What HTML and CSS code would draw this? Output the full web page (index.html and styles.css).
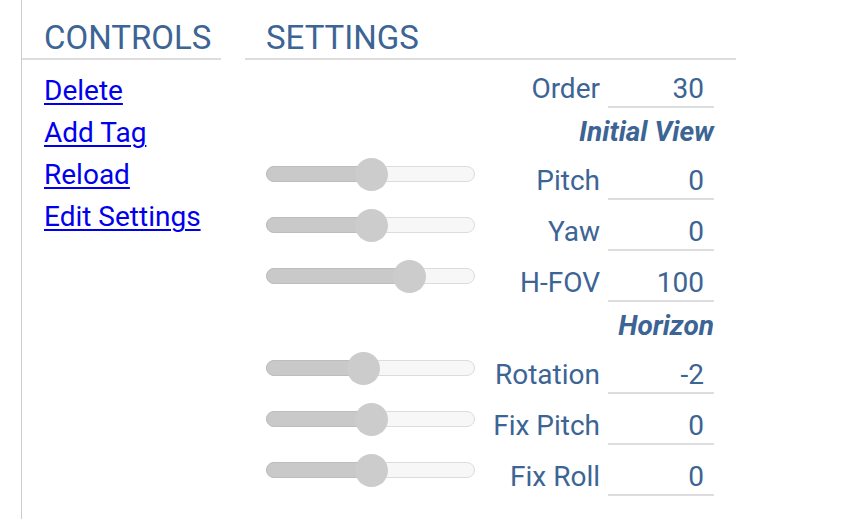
FILE: index.html
```html
<!DOCTYPE html>
<html>
<head>
<meta charset="utf-8">
<link rel="stylesheet" href="styles.css">
</head>
<body>
<div class="page">
  <div class="controls">
    <div class="head">CONTROLS</div>
    <ul class="links">
      <li><a href="#">Delete</a></li>
      <li><a href="#">Add Tag</a></li>
      <li><a href="#">Reload</a></li>
      <li><a href="#">Edit Settings</a></li>
    </ul>
  </div>
  <div class="settings">
    <div class="head">SETTINGS</div>
    <div class="rows">
      <div class="row first">
        <div class="slot"></div>
        <label class="lbl">Order</label>
        <div class="val">30</div>
      </div>
      <div class="group">Initial View</div>
      <div class="row">
        <div class="slot"><div class="track" style="--f:0.5"><div class="fill"></div><div class="thumb"></div></div></div>
        <label class="lbl">Pitch</label>
        <div class="val">0</div>
      </div>
      <div class="row">
        <div class="slot"><div class="track" style="--f:0.5"><div class="fill"></div><div class="thumb"></div></div></div>
        <label class="lbl">Yaw</label>
        <div class="val">0</div>
      </div>
      <div class="row">
        <div class="slot"><div class="track" style="--f:0.7175"><div class="fill"></div><div class="thumb"></div></div></div>
        <label class="lbl">H-FOV</label>
        <div class="val">100</div>
      </div>
      <div class="group">Horizon</div>
      <div class="row">
        <div class="slot"><div class="track" style="--f:0.455"><div class="fill"></div><div class="thumb"></div></div></div>
        <label class="lbl">Rotation</label>
        <div class="val">-2</div>
      </div>
      <div class="row">
        <div class="slot"><div class="track" style="--f:0.5"><div class="fill"></div><div class="thumb"></div></div></div>
        <label class="lbl">Fix Pitch</label>
        <div class="val">0</div>
      </div>
      <div class="row">
        <div class="slot"><div class="track" style="--f:0.5"><div class="fill"></div><div class="thumb"></div></div></div>
        <label class="lbl">Fix Roll</label>
        <div class="val">0</div>
      </div>
    </div>
  </div>
</div>
</body>
</html>
```

FILE: styles.css
```css
html, body {
  margin: 0;
  padding: 0;
  background: #ffffff;
}
body {
  font-family: Roboto, "Liberation Sans", sans-serif;
  color: #3c6494;
  overflow: hidden;
}
.page {
  display: flex;
  align-items: stretch;
  padding-left: 21px;
  min-height: 519px;
  gap: 24px;
}
.controls {
  width: 199px;
  border-left: 1px solid #cccccc;
  min-height: 519px;
}
.head {
  font-size: 33px;
  line-height: 36px;
  padding-top: 20px;
  padding-bottom: 2px;
  border-bottom: 2px solid #dddddd;
}
.controls .head {
  padding-left: 22px;
}
.links {
  list-style: none;
  margin: 10px 0 0 0;
  padding: 0 0 0 22px;
}
.links li {
  font-size: 28px;
  line-height: 42px;
}
.links a {
  color: #0000ee;
  text-decoration: underline;
  text-decoration-thickness: 2px;
  text-underline-offset: 3px;
}
.settings {
  width: 448px;
  padding: 0 22px 0 21px;
}
.settings .head {
  margin-left: -21px;
  margin-right: -22px;
  padding-left: 21px;
}
.rows {
  display: flex;
  flex-direction: column;
}
.row {
  display: grid;
  grid-template-columns: 209px 133px 106px;
  align-items: end;
  margin-top: 8px;
  font-size: 28px;
}
.row.first {
  margin-top: 5px;
}
.lbl {
  text-align: right;
  line-height: 34px;
  padding-top: 2px;
  padding-bottom: 2px;
  padding-right: 8px;
}
.row .lbl {
  grid-column: 2;
}
.val {
  line-height: 34px;
  padding-top: 2px;
  text-align: right;
  padding-right: 10px;
  border-bottom: 2px solid #dddddd;
}
.slot {
  height: 34px;
  margin-bottom: 9px;
  display: flex;
  align-items: center;
}
.track {
  position: relative;
  width: 209px;
  height: 16px;
  box-sizing: border-box;
  border-radius: 8px;
  background: #f7f7f7;
  border: 1px solid #dcdcdc;
}
.fill {
  position: absolute;
  left: -1px;
  top: -1px;
  height: 16px;
  box-sizing: border-box;
  width: calc(var(--f) * (100% - 30px) + 17px);
  background: #c9c9c9;
  border: 1px solid #bdbdbd;
  border-radius: 8px 0 0 8px;
}
.thumb {
  position: absolute;
  top: -9px;
  left: calc(var(--f) * (100% - 30px) - 1px);
  width: 33px;
  height: 33px;
  border-radius: 50%;
  background: #cccccc;
}
.group {
  font-size: 28px;
  line-height: 36px;
  font-weight: bold;
  font-style: italic;
  text-align: right;
  margin-top: 6px;
}
.group + .row {
  margin-top: 7px;
}
```
